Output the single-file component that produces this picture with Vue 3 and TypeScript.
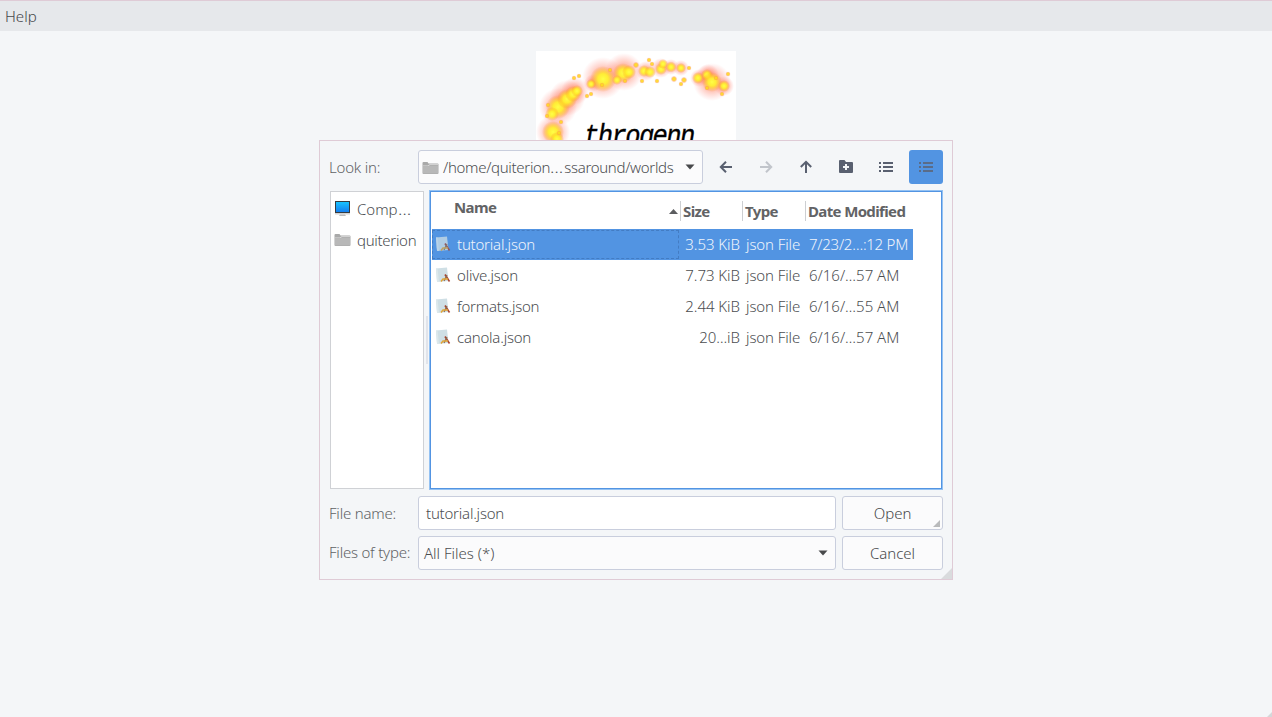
<script setup lang="ts">
interface FileRow { name: string; size: string; date: string; selected?: boolean }
const files: FileRow[] = [
  { name: 'tutorial.json', size: '3.53 KiB', date: '7/23/2…:12 PM', selected: true },
  { name: 'olive.json', size: '7.73 KiB', date: '6/16/…57 AM' },
  { name: 'formats.json', size: '2.44 KiB', date: '6/16/…55 AM' },
  { name: 'canola.json', size: '20…iB', date: '6/16/…57 AM' },
]
// x, y, radius of each glowing cluster
const halos = [[22, 56, 19], [31, 47, 18], [39, 40, 14], [17, 81, 17], [67, 27, 21], [88, 21, 19], [57, 32, 9], [110, 20, 10], [125, 17, 10], [135, 16, 8], [145, 17, 8], [163, 27, 9], [172, 24, 11], [176, 31, 19], [188, 35, 10]]
const cores = [[22, 56, 12], [16, 63, 7], [31, 48, 10], [37, 43, 8], [41, 40, 6], [17, 81, 11], [21, 88, 7], [67, 28, 13], [87, 22, 10], [93, 21, 7], [81, 29, 5], [55, 33, 5], [108, 20, 6], [114, 21, 6], [125, 18, 6], [127, 13, 5], [135, 16, 5.5], [145, 17, 5], [162, 27, 6], [171, 24, 6], [176, 31, 10], [188, 35, 6]]
const sparks = [[12, 54, 2], [11, 65, 2], [25, 71, 2], [23, 82, 2], [38, 27, 2], [43, 25, 2], [51, 45, 2], [55, 43, 2], [74, 19, 2], [100, 14, 2.5], [113, 9, 2], [116, 13, 2], [106, 30, 2], [121, 30, 2], [138, 28, 2.5], [145, 33, 2], [148, 29, 2.5], [153, 17, 2], [186, 43, 2], [192, 23, 2], [180, 27, 2], [171, 37, 2], [66, 34, 2], [89, 30, 2]]
</script>

<template>
  <main class="window">
    <div class="menubar"><span>Help</span></div>
    <svg class="logo" viewBox="0 0 200 100">
      <defs>
        <radialGradient id="halo"><stop offset="0" stop-color="#ff6020" stop-opacity=".65" /><stop offset=".5" stop-color="#ff7050" stop-opacity=".38" /><stop offset="1" stop-color="#ff8080" stop-opacity="0" /></radialGradient>
        <radialGradient id="core"><stop offset="0" stop-color="#ffff48" /><stop offset=".4" stop-color="#fff42c" stop-opacity=".9" /><stop offset=".68" stop-color="#ffd020" stop-opacity=".5" /><stop offset="1" stop-color="#ff8030" stop-opacity="0" /></radialGradient>
        <radialGradient id="spark"><stop offset="0" stop-color="#ffe91c" /><stop offset=".55" stop-color="#ffc326" stop-opacity=".8" /><stop offset="1" stop-color="#ff8060" stop-opacity=".1" /></radialGradient>
      </defs>
      <rect width="200" height="100" fill="#fff" />
      <circle v-for="(c, i) in halos" :key="'h' + i" :cx="c[0]" :cy="c[1]" :r="c[2]" fill="url(#halo)" />
      <circle v-for="(c, i) in cores" :key="'c' + i" :cx="c[0]" :cy="c[1]" :r="c[2]" fill="url(#core)" />
      <circle v-for="(c, i) in sparks" :key="'s' + i" :cx="c[0]" :cy="c[1]" :r="c[2] * 1.25" fill="url(#spark)" />
      <text class="wordmark" transform="translate(48 94) scale(1.16 1.36)" textLength="96">throgenn</text>
    </svg>
    <section class="dialog">
      <div class="row">
        <label class="tight">Look in:</label>
        <div class="control path">
          <svg class="folder" viewBox="0 0 17 14"><path d="M.5 2q0-1 1-1h4l1 1.500h9q1 0 1 1V12q0 1-1 1h-14q-1 0-1-1z" fill="#a9a9a9" /><path d="M1 4.500h5l1.500-1.300h8.500V4H8L6.500 5.200H1z" fill="#dedede" /><path d="M1 5.500h5.700L8 4.500h8V12.500H1z" fill="#b8b8b8" /></svg>
          <span class="path-text">/home/quiterion<span class="dots">…</span>ssaround/worlds</span>
          <svg class="arrow" viewBox="0 0 10 6"><path d="M.5 .5h9L5 5.500z" /></svg>
        </div>
        <div class="tools">
          <i><svg viewBox="0 0 16 16"><path d="M14 8H3M8 2.800L2.800 8 8 13.200" class="stroke" /></svg></i>
          <i class="dim"><svg viewBox="0 0 16 16"><path d="M2 8h11M8 2.800L13.200 8 8 13.200" class="stroke" /></svg></i>
          <i><svg viewBox="0 0 16 16"><path d="M8 14V3M2.800 8L8 2.800 13.200 8" class="stroke" /></svg></i>
          <i><svg viewBox="0 0 16 16"><path fill-rule="evenodd" d="M2 1h4.500L8 3h6q1 0 1 1v9q0 1-1 1H2q-1 0-1-1V2q0-1 1-1zM7 5v2H5v2h2v2h2V9h2V7H9V5z" /></svg></i>
          <i v-for="n in 2" :key="n" :class="{ active: n === 2 }"><svg viewBox="0 0 16 16"><path d="M1 3h2v2H1zM1 7h2v2H1zM1 11h2v2H1zM5 3h10v2H5zM5 7h10v2H5zM5 11h10v2H5z" /></svg></i>
        </div>
      </div>
      <div class="browser">
        <div class="places">
          <div class="place">
            <svg viewBox="0 0 17 16"><defs><linearGradient id="screen" x2="0" y2="1"><stop stop-color="#18c3ff" /><stop offset="1" stop-color="#147ff0" /></linearGradient></defs><path d="M1 0h15v12H1z" fill="#363c40" /><path d="M2 1h13v10H2z" fill="url(#screen)" /><path d="M1 12h15v1.500H1z" fill="#d3d3d3" /><path d="M6 13.500h5l1 1.500H5z" fill="#bcbcbc" /></svg>
            <span>Comp<span class="dots">…</span></span>
          </div>
          <div class="place">
            <svg viewBox="0 0 17 14"><path d="M.5 2q0-1 1-1h4l1 1.500h9q1 0 1 1V12q0 1-1 1h-14q-1 0-1-1z" fill="#a9a9a9" /><path d="M1 4.500h5l1.500-1.300h8.500V4H8L6.500 5.200H1z" fill="#dedede" /><path d="M1 5.500h5.700L8 4.500h8V12.500H1z" fill="#b8b8b8" /></svg>
            <span class="tight">quiterion</span>
          </div>
        </div>
        <div class="splitter"></div>
        <div class="listing">
          <div class="header">
            <div class="h-name"><span>Name</span><svg viewBox="0 0 9 5"><path d="M0 5h9L4.500 0z" /></svg></div>
            <div>Size</div><div>Type</div><div>Date Modified</div>
          </div>
          <div v-for="f in files" :key="f.name" class="file" :class="{ selected: f.selected }">
            <div class="f-name">
              <svg viewBox="0 0 16 16"><path d="M1 1.500L12 .5 13.500 14 2 15z" fill="#cfdfe5" /><path d="M1 1.500L2.500 1.300 4 14.800 2 15z" fill="#dde8eb" /><path d="M10 7.500l4.500 7" stroke="#a94432" stroke-width="1.600" /><path d="M12 8l-3 6" stroke="#8d6d50" stroke-width="1.300" /><path d="M6 14.500l2-2.500 5 0" fill="none" stroke="#e2a638" stroke-width="1.500" /></svg>
              <span class="tight">{{ f.name }}</span>
            </div>
            <div class="f-size">{{ f.size }}</div><div class="f-type">json File</div><div class="f-date">{{ f.date }}</div>
          </div>
        </div>
      </div>
      <div class="row">
        <label class="tight">File name:</label>
        <div class="control field tight">tutorial.json</div>
        <button>Open<svg class="grip" viewBox="0 0 7 7"><path d="M7 0v7H0z" /></svg></button>
      </div>
      <div class="row last">
        <label class="tight">Files of type:</label>
        <div class="control combo"><span>All Files (*)</span><svg class="arrow" viewBox="0 0 10 6"><path d="M.5 .5h9L5 5.500z" /></svg></div>
        <button>Cancel</button>
      </div>
      <svg class="resize" viewBox="0 0 11 11"><path d="M11 0v11H0z" /></svg>
    </section>
    <svg class="corner" viewBox="0 0 5 5"><path d="M5 0v5H0z" /></svg>
  </main>
</template>

<style>
body { margin: 0; overflow: hidden; }
</style>
<style scoped>
* { box-sizing: border-box; }
.window { position: relative; height: 717px; overflow: hidden; background: #f4f6f8; color: #4b4d50; font: 300 15px/20px "Noto Sans", sans-serif; white-space: nowrap; }
.menubar { height: 31px; padding: 5px 5px; background: #e6e8eb; border-top: 1px solid #dfcbd6; color: #45474a; }
.logo { display: block; width: 200px; height: 100px; margin: 20px 0 0 536px; }
.wordmark { font: italic 400 22px "Liberation Mono", monospace; fill: #000; stroke: #000; stroke-width: .25; }
.dialog { position: absolute; left: 319px; top: 140px; width: 634px; height: 440px; padding: 9px; border: 1px solid #dfcbd6; background: #f4f6f8; }
.row { display: flex; height: 34px; align-items: center; }
label { width: 89px; color: #606265; }
.tight { letter-spacing: -.22px; }
.dots { display: inline-block; letter-spacing: 0; transform: scaleX(1.2); transform-origin: left; margin-right: 3px; }
.control { height: 34px; background: #fbfbfc; border: 1px solid #c9cedd; border-radius: 3px; display: flex; align-items: center; }
.path { width: 285px; padding: 0 7px 0 3px; }
.folder { width: 17px; height: 14px; margin: 2px 4px 0 0; }
.path-text { flex: 1; letter-spacing: -.31px; }
.arrow { width: 10px; height: 6px; fill: #48494b; }
.tools { display: flex; gap: 6px; margin-left: 6px; }
.tools i { width: 34px; height: 34px; display: grid; place-items: center; border-radius: 3px; }
.tools svg { width: 16px; height: 16px; fill: #596070; }
.stroke { fill: none; stroke: #596070; stroke-width: 2; }
.dim { opacity: .32; }
.tools .active { background: #5294e2; }
.tools .active svg { fill: #5a6c88; }
.browser { display: flex; height: 298px; margin: 7px 0; }
.places { width: 94px; margin-left: 1px; padding: 1px 0 0 3px; background: #fff; border: 1px solid #cfd1d5; }
.place { height: 31px; display: flex; align-items: center; }
.place svg { width: 17px; height: 16px; margin-right: 6px; }
.place .tight { letter-spacing: -.3px; }
.splitter { width: 2px; height: 48px; margin: 125px 1px 0 2px; background: #e1e4eb; }
.listing { width: 514px; padding: 1px 2px; background: #fff; border: 1px solid #5294e2; box-shadow: 0 0 0 1px #94c2f3; width: 512px; height: 298px; margin-left: 1px; }
.header, .file { display: grid; grid-template-columns: 248px 62px 63px 108px; margin-left: -1px; }
.header { height: 36px; align-items: center; font-weight: 700; color: #626365; letter-spacing: -.64px; }
.header > div { height: 20px; padding-left: 2px; border-left: 1px solid #cdcfd2; }
.header .h-name { border: 0; padding: 0 2px 0 22px; display: flex; align-items: center; justify-content: space-between; }
.h-name span { margin-top: -8px; }
.h-name svg { width: 9px; height: 5px; fill: #5c5d60; }
.file { width: 481px; height: 31px; line-height: 31px; align-items: start; }
.selected { background: #5294e2; color: #f0f5fc; }
.f-name { height: 29px; margin: 1px 1px 0 0; display: flex; align-items: center; padding-left: 2px; border: 1px solid transparent; line-height: 27px; }
.selected .f-name { border: 1px dashed #437cc3; }
.f-name svg { width: 16px; height: 16px; margin-right: 6px; margin-top: -1px; }
.selected svg { opacity: .75; }
.f-size { text-align: right; padding-right: 2px; letter-spacing: -.05px; }
.f-type { padding-left: 4px; letter-spacing: -.1px; }
.f-date { padding-left: 4px; }
.selected .f-date { letter-spacing: -.25px; }
.field { width: 418px; padding: 0 0 0 7px; background: #fff; }
.combo { width: 418px; padding: 0 7px 0 5px; justify-content: space-between; }
button { position: relative; width: 101px; height: 34px; margin-left: 6px; padding: 0; border: 1px solid #c9cedd; border-radius: 3px; background: #fbfbfc; color: #48494b; font: inherit; }
.last { margin-top: 6px; }
.last label { margin-top: -2px; }
.grip { position: absolute; right: 2px; bottom: 2px; width: 7px; height: 7px; fill: #b9babb; }
.resize { position: absolute; right: 0; bottom: 0; width: 11px; height: 11px; fill: #d9dbdd; }
.corner { position: absolute; right: 0; bottom: 0; width: 5px; height: 5px; fill: #d5d7d9; }
</style>
